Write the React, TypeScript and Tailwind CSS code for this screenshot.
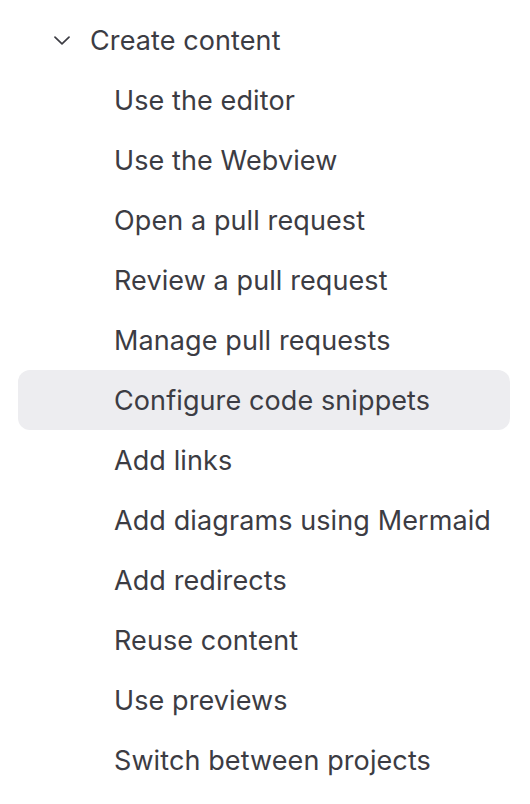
import React from 'react';

const items = [
  'Use the editor',
  'Use the Webview',
  'Open a pull request',
  'Review a pull request',
  'Manage pull requests',
  'Configure code snippets',
  'Add links',
  'Add diagrams using Mermaid',
  'Add redirects',
  'Reuse content',
  'Use previews',
  'Switch between projects',
];

const active = 'Configure code snippets';

export default function App() {
  return (
    <div className="min-h-screen w-[530px] bg-white pt-[10px] text-[#3c3c43]" style={{ fontFamily: 'Inter, "Noto Sans", sans-serif' }}>
      <div className="flex h-[60px] items-center">
        <div className="flex w-[90px] justify-end pr-[20px]">
          <svg width="16" height="9" viewBox="0 0 16 9" fill="none" className="text-[#3c3c43]">
            <path d="M1 1.2 L8 7.8 L15 1.2" stroke="currentColor" strokeWidth="1.7" strokeLinecap="round" strokeLinejoin="round" />
          </svg>
        </div>
        <span className="text-[27px] leading-none tracking-[0.1px]">Create content</span>
      </div>
      <ul className="flex flex-col">
        {items.map((item) => (
          <li
            key={item}
            className={`ml-[18px] flex h-[60px] w-[492px] items-center rounded-[12px] pl-[96px] text-[27px] leading-none tracking-[0.1px] ${item === active ? 'bg-[#ededf0]' : ''}`}
          >
            {item}
          </li>
        ))}
      </ul>
    </div>
  );
}
